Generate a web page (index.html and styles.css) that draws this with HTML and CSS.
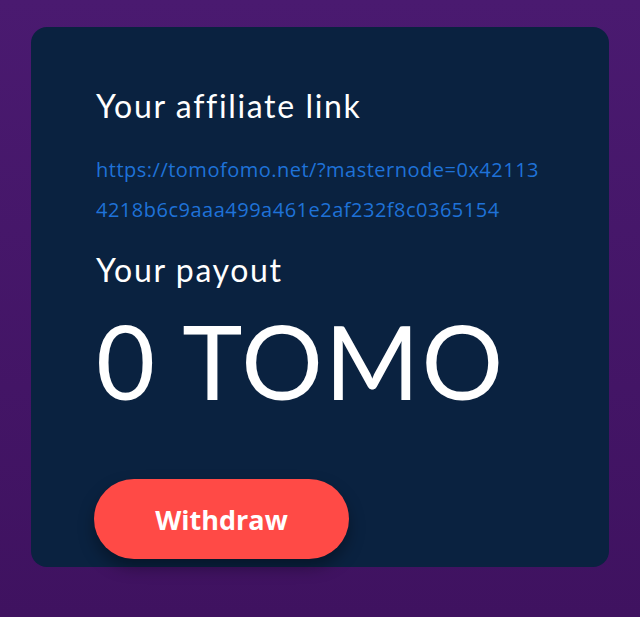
FILE: index.html
```html
<!DOCTYPE html>
<html>
<head>
<meta charset="utf-8">
<link rel="stylesheet" href="styles.css">
</head>
<body>
<div class="card">
  <h2 class="title">Your affiliate link</h2>
  <a class="link" href="#">https://tomofomo.net/?masternode=0x42113<br>4218b6c9aaa499a461e2af232f8c0365154</a>
  <h2 class="title payout-title">Your payout</h2>
  <div class="amount">0 TOMO</div>
  <button class="btn">Withdraw</button>
</div>
</body>
</html>
```
FILE: styles.css
```css
html, body {
  margin: 0;
  padding: 0;
  height: 617px;
  overflow: hidden;
}
body {
  background: linear-gradient(180deg, #4a1a70 0%, #3f1260 100%);
  padding: 27px 31px 0 31px;
  box-sizing: border-box;
}
.card {
  background: #0a2240;
  border-radius: 16px;
  height: 540px;
  box-sizing: border-box;
  padding: 59px 0 0 65px;
  display: flex;
  flex-direction: column;
  align-items: flex-start;
}
.title {
  margin: 0;
  font-family: "Lato", sans-serif;
  font-weight: 400;
  font-size: 32px;
  line-height: 40px;
  color: #ffffff;
  letter-spacing: 1.65px;
}
.link {
  margin-top: 24px;
  font-family: "Open Sans", sans-serif;
  font-size: 20px;
  line-height: 40px;
  letter-spacing: 0.5px;
  color: #1f72d8;
  text-decoration: none;
}
.payout-title {
  margin-top: 20px;
}
.amount {
  font-family: "Lato", sans-serif;
  font-weight: 400;
  font-size: 102px;
  line-height: 110px;
  letter-spacing: 2px;
  color: #ffffff;
  margin-top: 16px;
}
.btn {
  margin-top: 63px;
  margin-left: -2px;
  width: 255px;
  height: 80px;
  border: none;
  border-radius: 40px;
  background: #ff4a46;
  color: #ffffff;
  font-family: "Open Sans", sans-serif;
  font-weight: 700;
  font-size: 27px;
  box-shadow: 0 8px 16px rgba(0,0,0,0.35);
}
```
